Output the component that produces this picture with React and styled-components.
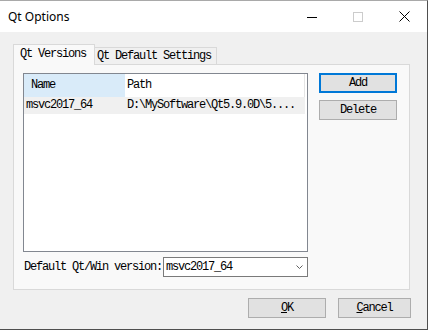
import React from "react";
import styled, { createGlobalStyle } from "styled-components";

const GlobalStyle = createGlobalStyle`
  html, body { margin: 0; padding: 0; background: #f0f0f0; }
  body { font-family: "Liberation Mono", monospace; color: #000; }
`;

const MONO = `font-family: "Liberation Mono", monospace; font-size: 12px; letter-spacing: -1.2px;`;
const PANE_BG = "#f9f9f9";

const Window = styled.div`
  width: 428px;
  height: 330px;
  box-sizing: border-box;
  border-top: 1px solid #a9a9a9;
  border-right: 1px solid #4f4f4f;
  border-bottom: 1px solid #4f4f4f;
  background: #f0f0f0;
  display: flex;
  flex-direction: column;
`;

const TitleBar = styled.div`
  height: 31px;
  flex: none;
  background: #fff;
  display: flex;
  align-items: center;
`;

const Title = styled.div`
  flex: 1;
  padding-left: 8px;
  font-family: "Noto Sans", sans-serif;
  font-size: 12px;
  color: #000;
`;

const CaptionButton = styled.div`
  width: 46px;
  height: 31px;
  display: flex;
  align-items: center;
  justify-content: center;
`;

const Body = styled.div`
  flex: 1;
  box-sizing: border-box;
  padding: 12px 17px 0 13px;
  display: flex;
  flex-direction: column;
`;

const TabBar = styled.div`
  height: 20px;
  display: flex;
  align-items: flex-end;
`;

const Tab = styled.div`
  ${MONO}
  box-sizing: border-box;
  width: ${(p) => p.$w}px;
  border: 1px solid #d9d9d9;
  border-bottom: none;
  white-space: nowrap;
  ${(p) =>
    p.$active
      ? `
    height: 21px;
    margin-bottom: -1px;
    margin-right: -2px;
    padding-left: 6px;
    line-height: 18px;
    background: ${PANE_BG};
    position: relative;
    z-index: 1;
  `
      : `
    height: 17px;
    padding-left: 3px;
    line-height: 16px;
    background: #f0f0f0;
  `}
`;

const Pane = styled.div`
  box-sizing: border-box;
  height: 226px;
  border: 1px solid #d9d9d9;
  background: ${PANE_BG};
  padding: 8px 11px 12px 9px;
  display: grid;
  grid-template-columns: 285px 78px;
  grid-template-rows: 179px 20px;
  column-gap: 11px;
  row-gap: 5px;
`;

const Tree = styled.div`
  box-sizing: border-box;
  border: 1px solid #828790;
  background: #fff;
  display: flex;
  flex-direction: column;
`;

const HeaderRow = styled.div`
  display: flex;
  height: 23px;
`;

const HeaderCell = styled.div`
  ${MONO}
  box-sizing: border-box;
  width: ${(p) => p.$w}px;
  padding-left: ${(p) => p.$pad}px;
  line-height: 23px;
  background: ${(p) => (p.$active ? "#d9ebf9" : "#fff")};
  border-right: 1px solid ${(p) => (p.$active ? "#d9ebf9" : "#e5e5e5")};
  white-space: nowrap;
`;

const Row = styled.div`
  display: flex;
  height: 17px;
  width: 281px;
  background: #f0f0f0;
`;

const Cell = styled.div`
  ${MONO}
  box-sizing: border-box;
  width: ${(p) => p.$w}px;
  padding-left: 2px;
  line-height: 17px;
  white-space: nowrap;
  overflow: hidden;
`;

const ButtonColumn = styled.div`
  display: flex;
  flex-direction: column;
  gap: 7px;
`;

const Button = styled.button`
  ${MONO}
  box-sizing: border-box;
  width: ${(p) => p.$w || 78}px;
  height: 20px;
  margin: 0;
  padding: 0;
  background: #e1e1e1;
  color: #000;
  border: ${(p) => (p.$focus ? "2px solid #0078d7" : "1px solid #adadad")};
  line-height: ${(p) => (p.$focus ? 16 : 18)}px;
  text-align: center;
`;

const Mnemonic = styled.span`
  text-decoration: underline;
`;

const ComboRow = styled.div`
  display: flex;
  align-items: center;
  padding-left: 1px;
`;

const Label = styled.div`
  ${MONO}
  width: 139px;
  line-height: 20px;
  white-space: nowrap;
`;

const Combo = styled.div`
  ${MONO}
  flex: 1;
  box-sizing: border-box;
  height: 20px;
  border: 1px solid #7a7a7a;
  background: #fff;
  padding: 0 4px 0 2px;
  display: flex;
  align-items: center;
  justify-content: space-between;
  line-height: 18px;
`;

const Footer = styled.div`
  display: flex;
  justify-content: flex-end;
  gap: 12px;
  margin-top: 8px;
  margin-right: -1px;
`;

export default function App() {
  return (
    <>
      <GlobalStyle />
      <Window>
        <TitleBar>
          <Title>Qt Options</Title>
          <CaptionButton>
            <svg width="10" height="10" viewBox="0 0 10 10">
              <line x1="0" y1="5.5" x2="10" y2="5.5" stroke="#000" strokeWidth="1" />
            </svg>
          </CaptionButton>
          <CaptionButton>
            <svg width="10" height="10" viewBox="0 0 10 10">
              <rect x="0.5" y="0.5" width="9" height="9" fill="none" stroke="#cccccc" strokeWidth="1" />
            </svg>
          </CaptionButton>
          <CaptionButton>
            <svg width="11" height="11" viewBox="0 0 11 11">
              <path d="M0.5 0.5 L10.5 10.5 M10.5 0.5 L0.5 10.5" stroke="#000" strokeWidth="1" fill="none" />
            </svg>
          </CaptionButton>
        </TitleBar>
        <Body>
          <TabBar>
            <Tab $active $w={82}>Qt Versions</Tab>
            <Tab $w={124}>Qt Default Settings</Tab>
          </TabBar>
          <Pane>
            <Tree>
              <HeaderRow>
                <HeaderCell $w={101} $pad={7} $active>Name</HeaderCell>
                <HeaderCell $w={180} $pad={2}>Path</HeaderCell>
              </HeaderRow>
              <Row>
                <Cell $w={101}>msvc2017_64</Cell>
                <Cell $w={180}>D:\MySoftware\Qt5.9.0D\5....</Cell>
              </Row>
            </Tree>
            <ButtonColumn>
              <Button $focus>Add</Button>
              <Button>Delete</Button>
            </ButtonColumn>
            <ComboRow>
              <Label>Default Qt/Win version:</Label>
              <Combo>
                <span>msvc2017_64</span>
                <svg width="7" height="4" viewBox="0 0 7 4">
                  <polyline points="0.5,0.5 3.5,3.5 6.5,0.5" fill="none" stroke="#606060" strokeWidth="1" />
                </svg>
              </Combo>
            </ComboRow>
          </Pane>
          <Footer>
            <Button $w={78}>
              <Mnemonic>O</Mnemonic>K
            </Button>
            <Button $w={73}>
              <Mnemonic>C</Mnemonic>ancel
            </Button>
          </Footer>
        </Body>
      </Window>
    </>
  );
}
